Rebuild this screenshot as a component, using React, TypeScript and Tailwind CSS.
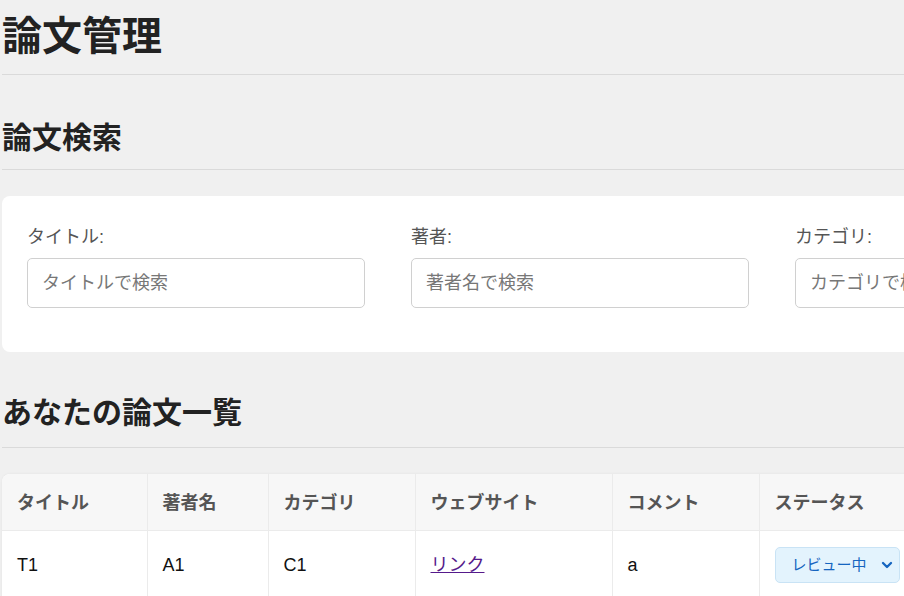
import { ChevronDown } from 'lucide-react';

const font = { fontFamily: '"Liberation Sans", "Noto Sans CJK JP", sans-serif' };

const fields = [
  { label: 'タイトル:', placeholder: 'タイトルで検索' },
  { label: '著者:', placeholder: '著者名で検索' },
  { label: 'カテゴリ:', placeholder: 'カテゴリで検索' },
];

const columns = [
  { name: 'タイトル', width: 'w-[145px]' },
  { name: '著者名', width: 'w-[121px]' },
  { name: 'カテゴリ', width: 'w-[147px]' },
  { name: 'ウェブサイト', width: 'w-[197px]' },
  { name: 'コメント', width: 'w-[147px]' },
  { name: 'ステータス', width: 'w-[399px]' },
];

export default function App() {
  return (
    <div className="min-h-screen w-full overflow-hidden bg-[#f0f0f0] text-[#222]" style={font}>
      <div className="w-[1158px] pl-[2px] pt-[12px]">
        <h1 className="border-b border-[#dadada] pb-[14px] text-[40px] font-bold leading-[48px] text-[#222]">
          論文管理
        </h1>

        <h2 className="mt-[45px] border-b border-[#dadada] pb-[13px] text-[30px] font-bold leading-[36px] text-[#222]">
          論文検索
        </h2>

        <div className="mt-[26px] rounded-lg bg-white px-[25px] pb-[44px] pt-[27px]">
          <div className="grid grid-cols-3 gap-[46px]">
            {fields.map(f => (
              <div key={f.label}>
                <label className="block text-[18px] leading-[28px] text-[#555]">{f.label}</label>
                <input
                  type="text"
                  placeholder={f.placeholder}
                  className="mt-[7px] block h-[50px] w-full rounded-[5px] border border-[#d0d0d0] bg-white px-[14px] text-[18px] text-[#333] placeholder:text-[#777] focus:outline-none"
                />
              </div>
            ))}
          </div>
        </div>

        <h2 className="mt-[43px] border-b border-[#dadada] pb-[16px] text-[30px] font-bold leading-[36px] text-[#222]">
          あなたの論文一覧
        </h2>

        <div className="mt-[26px] overflow-hidden rounded-tl-lg bg-white shadow-[0_0_3px_rgba(0,0,0,0.06)]">
          <table className="w-full table-fixed border-collapse text-left">
            <thead>
              <tr className="h-[56px] bg-[#f7f7f7]">
                {columns.map((c, i) => (
                  <th
                    key={c.name}
                    className={`${c.width} px-[15px] pt-[4px] text-[18px] font-semibold text-[#555] ${i > 0 ? 'border-l border-[#ebebeb]' : ''}`}
                  >
                    {c.name}
                  </th>
                ))}
              </tr>
            </thead>
            <tbody>
              <tr className="h-[70px] border-t border-[#ebebeb] text-[18px] text-[#111]">
                <td className="px-[15px]">T1</td>
                <td className="border-l border-[#ebebeb] px-[15px]">A1</td>
                <td className="border-l border-[#ebebeb] px-[15px]">C1</td>
                <td className="border-l border-[#ebebeb] px-[15px]">
                  <a href="#" className="text-[#551a8b] underline">リンク</a>
                </td>
                <td className="border-l border-[#ebebeb] px-[15px]">a</td>
                <td className="border-l border-[#ebebeb] px-[15px]">
                  <div className="relative w-[125px]">
                    <select className="block h-[36px] w-full appearance-none rounded-[5px] border border-[#c9e3f5] bg-[#e3f3fd] pl-[16px] text-[15px] text-[#1565c0] focus:outline-none">
                      <option>レビュー中</option>
                      <option>承認済み</option>
                      <option>却下</option>
                    </select>
                    <ChevronDown className="pointer-events-none absolute right-[5px] top-1/2 h-[16px] w-[16px] -translate-y-1/2 text-[#1565c0]" strokeWidth={3.5} />
                  </div>
                </td>
              </tr>
            </tbody>
          </table>
        </div>
      </div>
    </div>
  );
}
